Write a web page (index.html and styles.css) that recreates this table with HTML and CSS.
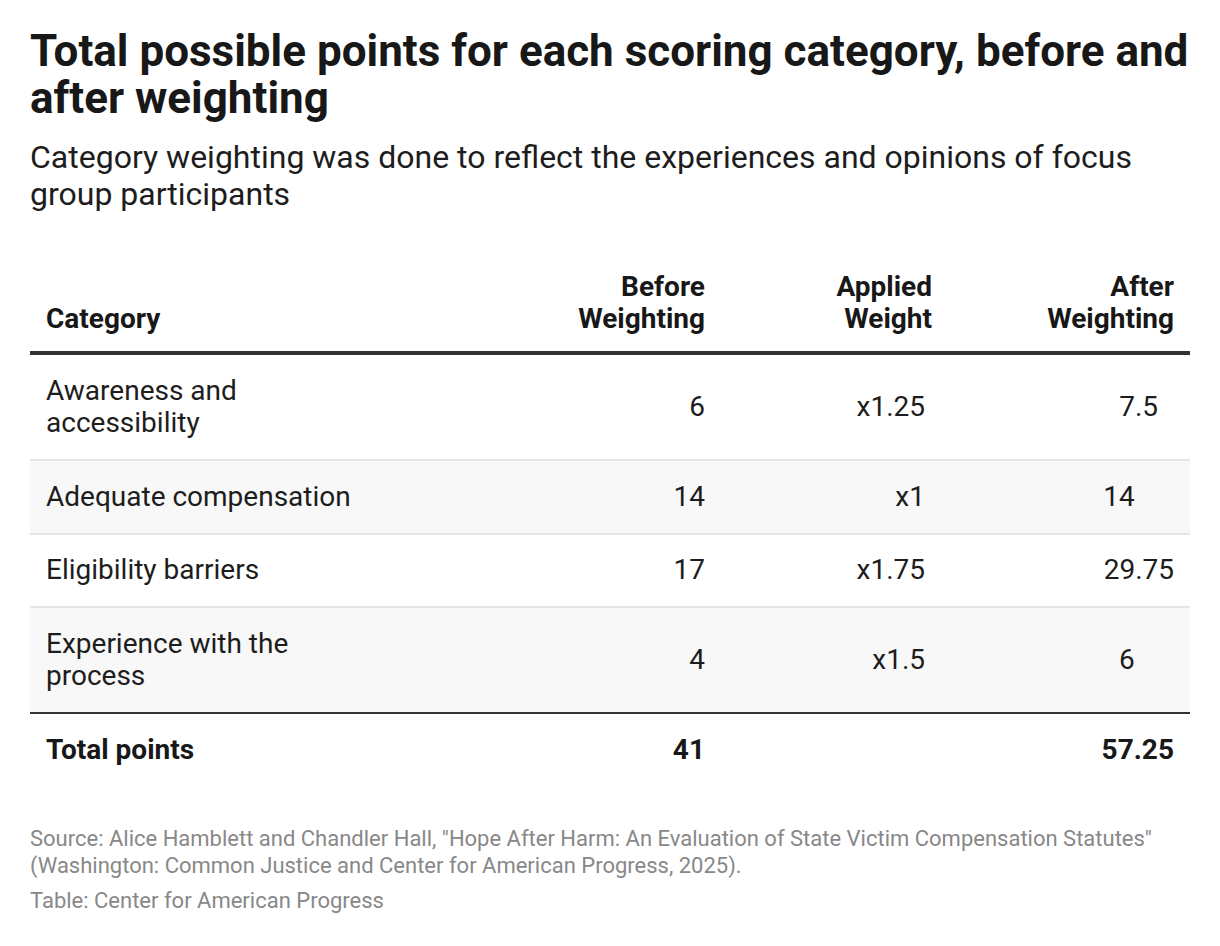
FILE: index.html
```html
<!DOCTYPE html>
<html lang="en">
<head>
<meta charset="utf-8">
<title>Total possible points</title>
<link rel="stylesheet" href="styles.css">
</head>
<body>
<div class="chart">
  <h1 class="title">Total possible points for each scoring category, before and after weighting</h1>
  <p class="subtitle">Category weighting was done to reflect the experiences and opinions of focus group participants</p>
  <table class="tbl">
    <colgroup>
      <col class="c1"><col class="c2"><col class="c3"><col class="c4">
    </colgroup>
    <thead>
      <tr>
        <th class="left">Category</th>
        <th class="num">Before<br>Weighting</th>
        <th class="num">Applied<br>Weight</th>
        <th class="num">After<br>Weighting</th>
      </tr>
    </thead>
    <tbody>
      <tr>
        <td class="left">Awareness and accessibility</td>
        <td class="num">6</td>
        <td class="num w">x1.25</td>
        <td class="num"><span class="d1">7.5</span></td>
      </tr>
      <tr class="alt">
        <td class="left">Adequate compensation</td>
        <td class="num">14</td>
        <td class="num w">x1</td>
        <td class="num"><span class="d0">14</span></td>
      </tr>
      <tr>
        <td class="left">Eligibility barriers</td>
        <td class="num">17</td>
        <td class="num w">x1.75</td>
        <td class="num">29.75</td>
      </tr>
      <tr class="alt">
        <td class="left">Experience with the process</td>
        <td class="num">4</td>
        <td class="num w">x1.5</td>
        <td class="num"><span class="d0">6</span></td>
      </tr>
    </tbody>
    <tfoot>
      <tr>
        <td class="left">Total points</td>
        <td class="num">41</td>
        <td class="num w"></td>
        <td class="num">57.25</td>
      </tr>
    </tfoot>
  </table>
  <div class="footer">
    <p class="source">Source: Alice Hamblett and Chandler Hall, "Hope After Harm: An Evaluation of State Victim Compensation Statutes" (Washington: Common Justice and Center for American Progress, 2025).</p>
    <p class="byline">Table: Center for American Progress</p>
  </div>
</div>
</body>
</html>
```

FILE: styles.css
```css
html, body {
  margin: 0;
  padding: 0;
  background: #ffffff;
}

body {
  font-family: Roboto, "Liberation Sans", Arial, sans-serif;
  color: #1d1d1d;
}

.chart {
  padding: 28px 30px 0 30px;
}

.title {
  margin: 0;
  font-size: 44px;
  line-height: 47px;
  font-weight: 700;
  color: #181818;
}

.subtitle {
  margin: 17px 0 0 0;
  font-size: 32px;
  line-height: 37px;
  font-weight: 400;
  color: #1d1d1d;
}

.tbl {
  width: 100%;
  margin-top: 50px;
  border-collapse: collapse;
  table-layout: fixed;
  font-size: 28px;
  color: #1d1d1d;
}

.c1 { width: 352px; }
.c2 { width: 339px; }
.c3 { width: 227px; }
.c4 { width: 242px; }

.tbl th {
  font-weight: 700;
  font-size: 28px;
  line-height: 32px;
  padding: 8px 16px 16px 16px;
  vertical-align: bottom;
  border-bottom: 4px solid #333333;
  color: #181818;
}

.tbl td {
  line-height: 32.5px;
  padding: 19.5px 16px;
  vertical-align: middle;
}

.tbl tbody tr + tr td {
  border-top: 2px solid #e6e6e6;
}

.tbl tr.alt td {
  background: #f8f8f8;
}

.tbl tfoot td {
  border-top: 2px solid #333333;
  font-weight: 700;
  color: #181818;
}

.left { text-align: left; }
.num { text-align: right; }
.tbl td.w { padding-right: 23px; }

.d1 { padding-right: 0.57em; }
.d0 { padding-right: 1.4em; }

.footer {
  margin-top: 39px;
  font-size: 22px;
  line-height: 27px;
  color: #888888;
}

.footer p {
  margin: 0;
}

.footer .byline {
  margin-top: 8px;
}
```
